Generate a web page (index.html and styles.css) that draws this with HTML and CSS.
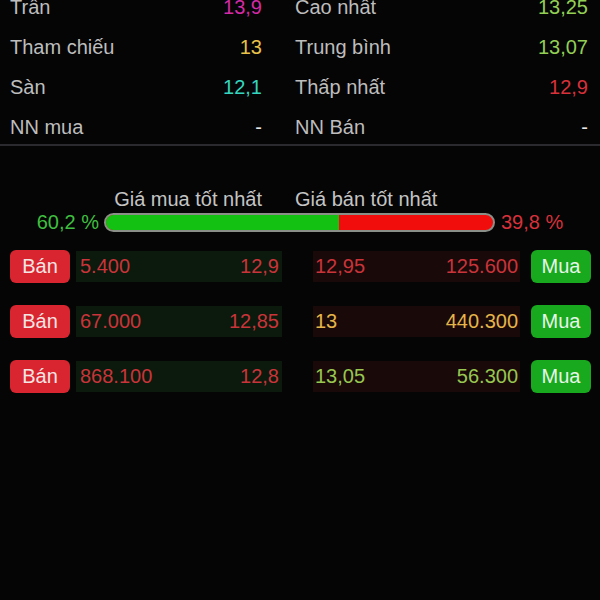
FILE: index.html
```html
<!DOCTYPE html>
<html lang="vi">
<head>
  <meta charset="UTF-8">
  <meta name="viewport" content="width=device-width, initial-scale=1.0">
  <title>Bảng giá</title>
  <link rel="stylesheet" href="styles.css">
</head>
<body>
<div class="stats">
  <div class="stat"><span class="lbl">Trần</span><span class="val ceil">13,9</span></div>
  <div class="stat"><span class="lbl">Cao nhất</span><span class="val up">13,25</span></div>
  <div class="stat"><span class="lbl">Tham chiếu</span><span class="val ref">13</span></div>
  <div class="stat"><span class="lbl">Trung bình</span><span class="val up">13,07</span></div>
  <div class="stat"><span class="lbl">Sàn</span><span class="val floor">12,1</span></div>
  <div class="stat"><span class="lbl">Thấp nhất</span><span class="val down">12,9</span></div>
  <div class="stat last"><span class="lbl">NN mua</span><span class="val plain">-</span></div>
  <div class="stat last"><span class="lbl">NN Bán</span><span class="val plain">-</span></div>
</div>

<div class="best">
  <div class="best-head">
    <span class="best-buy">Giá mua tốt nhất</span>
    <span class="best-sell">Giá bán tốt nhất</span>
  </div>
  <div class="ratio">
    <span class="pct up-pct">60,2 %</span>
    <div class="bar"><div class="bar-buy" style="width:60.2%"></div></div>
    <span class="pct down-pct">39,8 %</span>
  </div>
</div>

<div class="book">
  <div class="order">
    <button class="btn sell">Bán</button>
    <div class="cell bid down"><span>5.400</span><span>12,9</span></div>
    <div class="cell ask down"><span>12,95</span><span>125.600</span></div>
    <button class="btn buy">Mua</button>
  </div>
  <div class="order">
    <button class="btn sell">Bán</button>
    <div class="cell bid down"><span>67.000</span><span>12,85</span></div>
    <div class="cell ask ref"><span>13</span><span>440.300</span></div>
    <button class="btn buy">Mua</button>
  </div>
  <div class="order">
    <button class="btn sell">Bán</button>
    <div class="cell bid down"><span>868.100</span><span>12,8</span></div>
    <div class="cell ask up"><span>13,05</span><span>56.300</span></div>
    <button class="btn buy">Mua</button>
  </div>
</div>
</body>
</html>
```

FILE: styles.css
```css
body{
  margin:0;
  background-color:#050506;
  font-family:"Liberation Sans", Arial, sans-serif;
  font-size:20px;
  color:#c4c4c4;
  overflow:hidden;
}

/* thong tin gia */
.stats{
  display:grid;
  grid-template-columns:252px 293px;
  grid-template-rows:40px 40px 40px 37px;
  column-gap:33px;
  padding-left:10px;
  margin-top:-13px;
  border-bottom:2px solid #2a2a2f;
}
.stat{
  display:flex;
  align-items:center;
  justify-content:space-between;
  height:40px;
}
.lbl{ color:#bdbdbd; }
.ceil{ color:#d42aa6; }
.ref{ color:#e9c24a; }
.floor{ color:#34d6bf; }
.up{ color:#93cf55; }
.down{ color:#d8313a; }
.plain{ color:#e8e8e8; }

/* gia tot nhat */
.best{
  margin-top:41px;
}
.best-head{
  display:grid;
  grid-template-columns:252px 293px;
  column-gap:33px;
  padding-left:10px;
  line-height:24px;
}
.best-buy{ text-align:right; }
.ratio{
  display:flex;
  align-items:center;
  margin-top:-1px;
  height:24px;
}
.pct{
  line-height:24px;
}
.up-pct{
  width:99px;
  text-align:right;
  margin-right:5px;
  color:#3fbf3f;
}
.down-pct{
  margin-left:6px;
  color:#d8313a;
}
.bar{
  width:387px;
  height:15px;
  border:2px solid #8a8f88;
  border-radius:10px;
  background-color:#f20d0d;
  overflow:hidden;
}
.bar-buy{
  height:100%;
  background-color:#13c113;
}

/* so lenh */
.book{
  margin-top:15px;
  padding-left:10px;
}
.order{
  display:flex;
  align-items:center;
  height:34px;
  margin-bottom:21px;
}
.btn{
  width:60px;
  height:33px;
  border:none;
  border-radius:6px;
  font-family:inherit;
  font-size:20px;
  padding:0;
}
.sell{
  background-color:#d9252f;
  color:#f4e4e4;
}
.buy{
  background-color:#19a91f;
  color:#e6f5e6;
  margin-left:11px;
}
.cell{
  height:31px;
  display:flex;
  align-items:center;
  justify-content:space-between;
  margin-top:1px;
}
.bid{
  width:199px;
  margin-left:6px;
  padding:0 3px 0 4px;
  background-color:#0b1a0c;
}
.ask{
  width:203px;
  margin-left:31px;
  padding:0 2px;
  background-color:#1a0909;
}
.bid.down, .ask.down{ color:#c9343a; }
.ask.ref{ color:#e5b54a; }
.ask.up{ color:#97c651; }
```
